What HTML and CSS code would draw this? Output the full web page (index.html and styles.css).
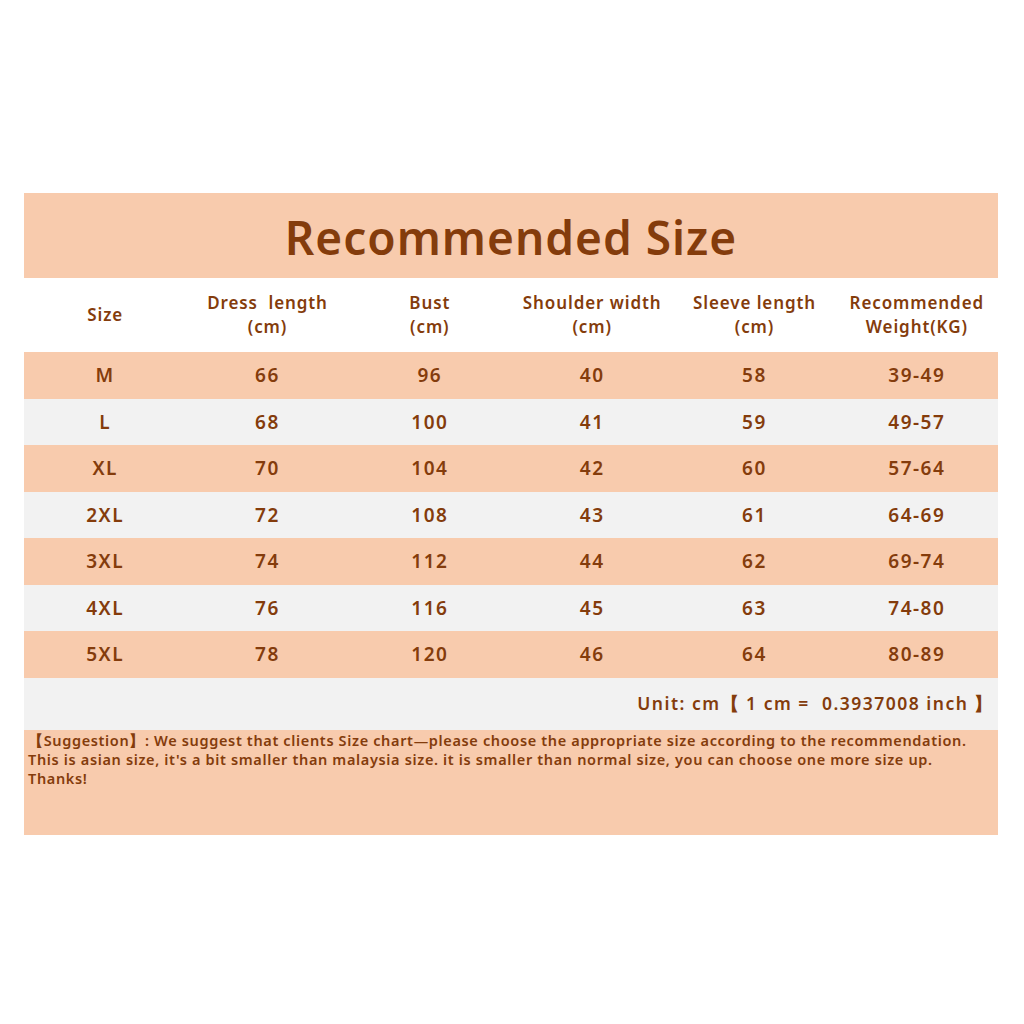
FILE: index.html
```html
<!DOCTYPE html>
<html lang="en">
<head>
<meta charset="utf-8">
<title>Recommended Size</title>
<link rel="stylesheet" href="styles.css">
</head>
<body>
<div class="chart">
  <div class="title">Recommended Size</div>
  <div class="row head">
    <div class="cell">Size</div>
    <div class="cell">Dress&nbsp; length<br>(cm)</div>
    <div class="cell">Bust<br>(cm)</div>
    <div class="cell">Shoulder width<br>(cm)</div>
    <div class="cell">Sleeve length<br>(cm)</div>
    <div class="cell">Recommended<br>Weight(KG)</div>
  </div>
  <div class="row peach"><div class="cell">M</div><div class="cell">66</div><div class="cell">96</div><div class="cell">40</div><div class="cell">58</div><div class="cell">39-49</div></div>
  <div class="row gray"><div class="cell">L</div><div class="cell">68</div><div class="cell">100</div><div class="cell">41</div><div class="cell">59</div><div class="cell">49-57</div></div>
  <div class="row peach"><div class="cell">XL</div><div class="cell">70</div><div class="cell">104</div><div class="cell">42</div><div class="cell">60</div><div class="cell">57-64</div></div>
  <div class="row gray"><div class="cell">2XL</div><div class="cell">72</div><div class="cell">108</div><div class="cell">43</div><div class="cell">61</div><div class="cell">64-69</div></div>
  <div class="row peach"><div class="cell">3XL</div><div class="cell">74</div><div class="cell">112</div><div class="cell">44</div><div class="cell">62</div><div class="cell">69-74</div></div>
  <div class="row gray"><div class="cell">4XL</div><div class="cell">76</div><div class="cell">116</div><div class="cell">45</div><div class="cell">63</div><div class="cell">74-80</div></div>
  <div class="row peach"><div class="cell">5XL</div><div class="cell">78</div><div class="cell">120</div><div class="cell">46</div><div class="cell">64</div><div class="cell">80-89</div></div>
  <div class="unit">Unit: cm【 1 cm =&nbsp; 0.3937008 inch 】</div>
  <div class="note">【Suggestion】: We suggest that clients Size chart—please choose the appropriate size according to the recommendation.<br>This is asian size, it's a bit smaller than malaysia size. it is smaller than normal size, you can choose one more size up.<br>Thanks!</div>
</div>
</body>
</html>
```
FILE: styles.css
```css
html, body {
  margin: 0;
  padding: 0;
  background: #ffffff;
}
body {
  font-family: "Noto Sans", "Open Sans", "DejaVu Sans", sans-serif;
  font-weight: 600;
  color: #843c0c;
}
.chart {
  width: 974px;
  margin: 193px 0 0 24px;
  display: flex;
  flex-direction: column;
}
.title {
  height: 85px;
  background: #f8cbad;
  display: flex;
  align-items: center;
  justify-content: center;
  font-size: 46px;
  letter-spacing: 1px;
  padding-top: 2px;
  box-sizing: border-box;
}
.row {
  display: grid;
  grid-template-columns: repeat(6, 1fr);
  height: 46.5px;
  font-size: 19px;
  letter-spacing: 1.5px;
}
.row.head {
  height: 74px;
  background: #ffffff;
  font-size: 17px;
  line-height: 24px;
  letter-spacing: 0.9px;
}
.peach { background: #f8cbad; }
.gray { background: #f2f2f2; }
.cell {
  display: flex;
  align-items: center;
  justify-content: center;
  text-align: center;
}
.unit {
  height: 52px;
  background: #f2f2f2;
  display: flex;
  align-items: center;
  justify-content: flex-end;
  padding-right: 4px;
  font-size: 17.5px;
  letter-spacing: 1.5px;
}
.note {
  height: 105px;
  box-sizing: border-box;
  background: #f8cbad;
  padding: 1px 0 0 4px;
  font-size: 14.5px;
  line-height: 19px;
  letter-spacing: 0.65px;
}
```
